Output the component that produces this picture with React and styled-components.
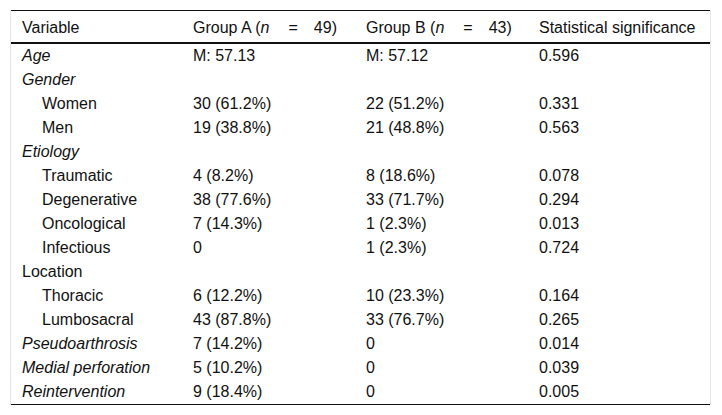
import React from 'react';
import styled, { createGlobalStyle } from 'styled-components';

const GlobalStyle = createGlobalStyle`
  body {
    margin: 0;
    background: #fff;
    font-family: "Liberation Sans", Arial, sans-serif;
    color: #111;
  }
`;

const Frame = styled.div`
  margin: 10px 0 0 10px;
  width: 701px;
  border-left: 1px solid #e6e6e6;
  border-right: 1px solid #e6e6e6;
  box-sizing: border-box;
`;

const Table = styled.table`
  width: 100%;
  border-collapse: collapse;
  table-layout: fixed;
  font-size: 16px;
  line-height: 18px;
  border-top: 1px solid #111;
  border-bottom: 1px solid #111;
`;

const HeadRow = styled.tr`
  border-bottom: 2px solid #111;
`;

const Th = styled.th`
  text-align: left;
  font-weight: normal;
  height: 29px;
  padding: 2px 0 0 11px;
  white-space: nowrap;
  vertical-align: middle;
`;

const Td = styled.td`
  height: 24px;
  padding: 0 0 0 ${(p) => (p.$indent ? 31 : 11)}px;
  white-space: nowrap;
  vertical-align: middle;
  font-style: ${(p) => (p.$italic ? 'italic' : 'normal')};
`;

const Eq = styled.span`
  margin: 0 16px 0 19px;
`;

const GroupHead = ({ label, n }) => (
  <>
    {label} (<i>n</i>
    <Eq>=</Eq>
    {n})
  </>
);

const rows = [
  { label: 'Age', italic: true, a: 'M: 57.13', b: 'M: 57.12', p: '0.596' },
  { label: 'Gender', italic: true },
  { label: 'Women', indent: true, a: '30 (61.2%)', b: '22 (51.2%)', p: '0.331' },
  { label: 'Men', indent: true, a: '19 (38.8%)', b: '21 (48.8%)', p: '0.563' },
  { label: 'Etiology', italic: true },
  { label: 'Traumatic', indent: true, a: '4 (8.2%)', b: '8 (18.6%)', p: '0.078' },
  { label: 'Degenerative', indent: true, a: '38 (77.6%)', b: '33 (71.7%)', p: '0.294' },
  { label: 'Oncological', indent: true, a: '7 (14.3%)', b: '1 (2.3%)', p: '0.013' },
  { label: 'Infectious', indent: true, a: '0', b: '1 (2.3%)', p: '0.724' },
  { label: 'Location' },
  { label: 'Thoracic', indent: true, a: '6 (12.2%)', b: '10 (23.3%)', p: '0.164' },
  { label: 'Lumbosacral', indent: true, a: '43 (87.8%)', b: '33 (76.7%)', p: '0.265' },
  { label: 'Pseudoarthrosis', italic: true, a: '7 (14.2%)', b: '0', p: '0.014' },
  { label: 'Medial perforation', italic: true, a: '5 (10.2%)', b: '0', p: '0.039' },
  { label: 'Reintervention', italic: true, a: '9 (18.4%)', b: '0', p: '0.005' },
];

export default function App() {
  return (
    <>
      <GlobalStyle />
      <Frame>
        <Table>
          <colgroup>
            <col style={{ width: 171 }} />
            <col style={{ width: 173 }} />
            <col style={{ width: 173 }} />
            <col />
          </colgroup>
          <thead>
            <HeadRow>
              <Th>Variable</Th>
              <Th>
                <GroupHead label="Group A" n="49" />
              </Th>
              <Th>
                <GroupHead label="Group B" n="43" />
              </Th>
              <Th>Statistical significance</Th>
            </HeadRow>
          </thead>
          <tbody>
            {rows.map((r) => (
              <tr key={r.label}>
                <Td $italic={r.italic} $indent={r.indent}>
                  {r.label}
                </Td>
                <Td>{r.a}</Td>
                <Td>{r.b}</Td>
                <Td>{r.p}</Td>
              </tr>
            ))}
          </tbody>
        </Table>
      </Frame>
    </>
  );
}
